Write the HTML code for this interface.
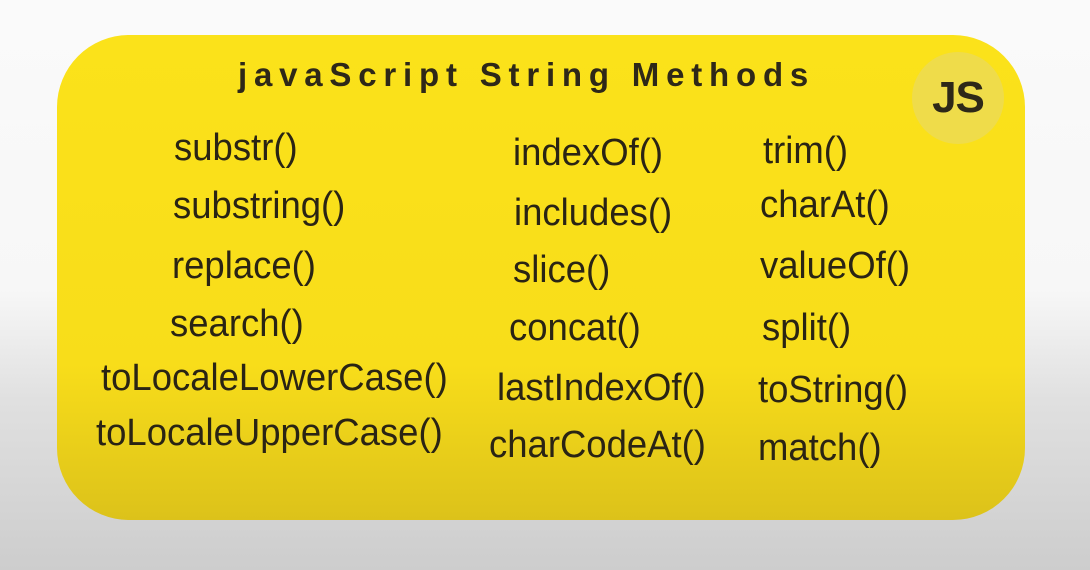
<!DOCTYPE html>
<html><head><meta charset="utf-8"><style>
body{margin:0;width:1090px;height:570px;overflow:hidden;background:linear-gradient(#fafafa 0,#f7f7f7 290px,#e0e0e0 400px,#cdcdcd 570px);font-family:"Liberation Sans",sans-serif;position:relative}
.card{position:absolute;left:57px;top:35px;width:968px;height:485px;border-radius:72px;background:linear-gradient(#fbe21a 0,#f8dd1a 330px,#dcc21a 485px)}
.t{position:absolute;font-size:38px;color:#2a2414;white-space:nowrap;line-height:1;transform:scaleX(0.96);transform-origin:left}
.title{position:absolute;left:238px;top:58px;font-size:33px;font-weight:bold;letter-spacing:6.8px;color:#2e2818;white-space:nowrap;line-height:1}
.js{position:absolute;left:912px;top:52px;width:92px;height:92px;border-radius:50%;background:#efdc4a;text-align:center;line-height:92px;font-weight:bold;font-size:44px;color:#2e2818;letter-spacing:-1px}
</style></head><body>
<div class="card"></div>
<div class="title">javaScript String Methods</div>
<div class="js">JS</div>
<div class="t" style="left:174px;top:129px">substr()</div>
<div class="t" style="left:173px;top:187px">substring()</div>
<div class="t" style="left:172px;top:247px">replace()</div>
<div class="t" style="left:170px;top:305px">search()</div>
<div class="t" style="left:101px;top:359px">toLocaleLowerCase()</div>
<div class="t" style="left:96px;top:414px">toLocaleUpperCase()</div>
<div class="t" style="left:513px;top:134px">indexOf()</div>
<div class="t" style="left:514px;top:194px">includes()</div>
<div class="t" style="left:513px;top:251px">slice()</div>
<div class="t" style="left:509px;top:309px">concat()</div>
<div class="t" style="left:497px;top:369px">lastIndexOf()</div>
<div class="t" style="left:489px;top:426px">charCodeAt()</div>
<div class="t" style="left:763px;top:132px">trim()</div>
<div class="t" style="left:760px;top:186px">charAt()</div>
<div class="t" style="left:760px;top:247px">valueOf()</div>
<div class="t" style="left:762px;top:309px">split()</div>
<div class="t" style="left:758px;top:371px">toString()</div>
<div class="t" style="left:758px;top:429px">match()</div>
</body></html>
